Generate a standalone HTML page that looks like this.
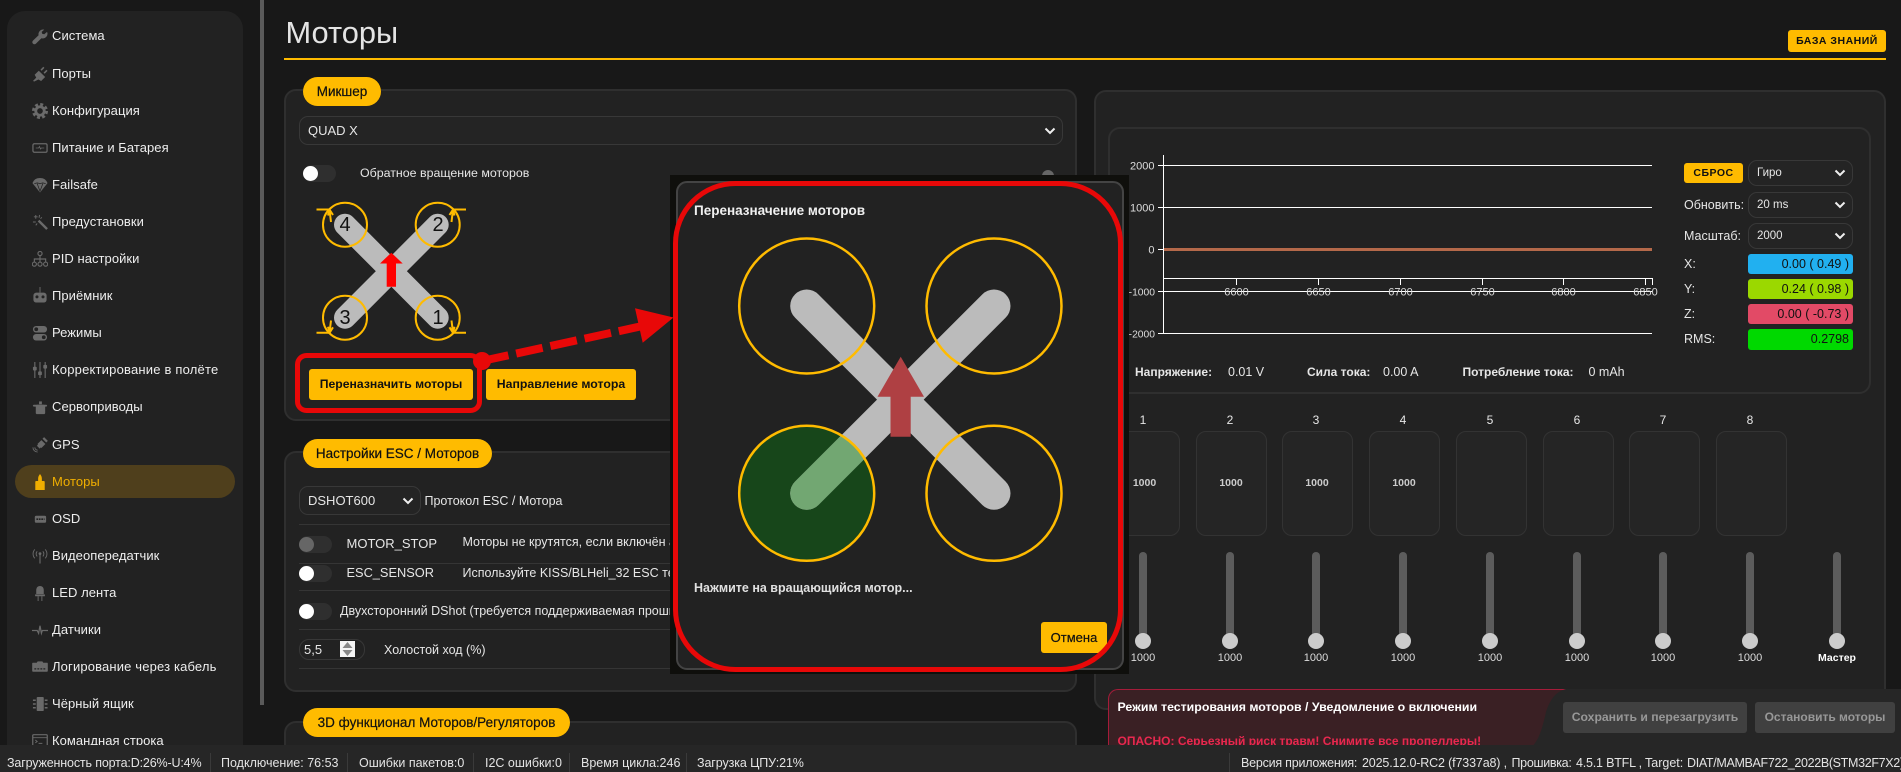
<!DOCTYPE html>
<html lang="ru"><head><meta charset="utf-8"><title>Моторы</title>
<style>
*{box-sizing:border-box}
html,body{margin:0;padding:0;width:1901px;height:772px;overflow:hidden;background:#181818}
body{position:relative;font-family:"Liberation Sans","DejaVu Sans",sans-serif;font-size:13px;color:#e6e6e6}
.a{position:absolute}
.t{position:absolute;white-space:nowrap;line-height:16px;height:16px;margin-top:-8px}
.panel{position:absolute;background:#222;border:2px solid #2f2f2f;border-radius:12px}
.pill{position:absolute;background:#ffbb00;color:#111;border-radius:15px;height:29px;line-height:29px;font-size:13.5px;text-align:center;white-space:nowrap;-webkit-text-stroke:.2px #111}
.btn{position:absolute;background:#ffbb00;color:#111;border-radius:3px;text-align:center;font-weight:bold;white-space:nowrap}
.sel{position:absolute;background:#242424;border:1px solid #383838;border-radius:9px;color:#e6e6e6;white-space:nowrap;padding-left:8px}
.sel svg{position:absolute;right:6px;top:50%;margin-top:-4px}
.tg{position:absolute;width:33px;height:17px;border-radius:9px;background:#2f2f2f}
.tg i{position:absolute;left:0;top:1px;width:15px;height:15px;border-radius:50%;background:#fff}
.sep{position:absolute;left:299px;width:764px;height:1px;background:#353535}
.mi{position:absolute;left:52px;white-space:nowrap;font-size:13px;line-height:16px;height:16px;margin-top:-8px;color:#eee;letter-spacing:.05px}
.ic{position:absolute;left:31.5px;width:16px;height:16px;margin-top:-8px;fill:#6a6a6a;stroke:#6a6a6a;stroke-width:0}
.box{position:absolute;top:431px;width:71px;height:105px;border:1px solid #333;border-radius:10px;background:#252525;color:#ccc;font-weight:bold;font-size:10.5px;text-align:center;line-height:103px}
.num{position:absolute;top:412px;width:30px;text-align:center;line-height:16px;color:#e6e6e6;font-size:12px}
.tr{position:absolute;top:552px;width:8px;height:91px;border-radius:4px;background:#5c5c5c}
.th{position:absolute;top:633px;width:16px;height:16px;border-radius:50%;background:#ccc}
.v{position:absolute;top:650px;width:40px;text-align:center;line-height:16px;color:#ddd;font-size:11px}
.rv{position:absolute;left:1748px;width:105px;height:20px;border-radius:3px;color:#111;text-align:right;padding-right:4px;line-height:20px;font-size:12.5px}
.st{position:absolute;top:755px;line-height:16px;font-size:12.5px;color:#e4e4e4;white-space:nowrap}
.ss{position:absolute;top:753px;bottom:0;width:1px;background:#3a3a3a}
</style></head><body>

<!-- sidebar -->
<div class="a" style="left:7px;top:11px;width:236px;height:760px;background:#222;border-radius:18px"></div>
<div class="a" style="left:260px;top:0;width:4px;height:705px;background:#5a5a5a"></div>
<div class="a" style="left:15px;top:465px;width:220px;height:33px;background:#4f3f1c;border-radius:17px"></div>

<div class="mi" style="top:36px">Система</div>
<div class="mi" style="top:73.5px">Порты</div>
<div class="mi" style="top:110.5px">Конфигурация</div>
<div class="mi" style="top:147.5px">Питание и Батарея</div>
<div class="mi" style="top:184.5px">Failsafe</div>
<div class="mi" style="top:221.5px">Предустановки</div>
<div class="mi" style="top:259px">PID настройки</div>
<div class="mi" style="top:296px">Приёмник</div>
<div class="mi" style="top:333px">Режимы</div>
<div class="mi" style="top:370px;letter-spacing:.2px">Корректирование в полёте</div>
<div class="mi" style="top:407px">Сервоприводы</div>
<div class="mi" style="top:444.5px">GPS</div>
<div class="mi" style="top:481.5px;color:#f0ae00">Моторы</div>
<div class="mi" style="top:518.5px">OSD</div>
<div class="mi" style="top:556px">Видеопередатчик</div>
<div class="mi" style="top:593px">LED лента</div>
<div class="mi" style="top:630px">Датчики</div>
<div class="mi" style="top:667px;letter-spacing:.15px">Логирование через кабель</div>
<div class="mi" style="top:704px">Чёрный ящик</div>
<div class="mi" style="top:741px">Командная строка</div>

<svg class="ic" style="top:36.5px" viewBox="0 0 17 17"><path d="M16 3l-3 2.6-2.2-.5-.5-2L13 .6A5 5 0 0 0 7 6.6L1 12.3a2.2 2.2 0 0 0 3.2 3.2L10 9.8A5 5 0 0 0 16 3z"/></svg>
<svg class="ic" style="top:73.5px" viewBox="0 0 17 17"><path d="M1 16l3.5-3.700-1.700-3 4.400-4.300 6.800 6.700-4.300 4.300-2.900-1.600L2.500 16.500zM9 3.800l3-3 1.200 1.200-3 3zM12.300 7l3-3 1.200 1.200-3 3z"/></svg>
<svg class="ic" style="top:110.5px" viewBox="0 0 17 17"><circle cx="8.5" cy="8.5" r="4.500" fill="none" stroke-width="3"/><circle cx="8.5" cy="8.5" r="7" fill="none" stroke-width="3" stroke-dasharray="3.1 2.4"/></svg>
<svg class="ic" style="top:147.5px" viewBox="0 0 17 17"><rect x="1" y="4" width="15" height="9" rx="1.5" fill="none" stroke-width="1.3"/><path d="M4 8.5h3l1-1.500 1 2.500 1-1h3" fill="none" stroke-width=".9"/></svg>
<svg class="ic" style="top:184.5px" viewBox="0 0 17 17"><path d="M.5 6.500C2 2.500 5 1 8.500 1s6.500 1.500 8 5.500l-8 10z"/><path d="M2.500 7l3-.8 3 .8 3-.8 3 .8M5.500 7l3 8 3-8" fill="none" stroke="#222" stroke-width=".8"/></svg>
<svg class="ic" style="top:221.5px" viewBox="0 0 17 17"><path d="M7 7l9 9" fill="none" stroke-width="2.6"/><path d="M4 1v4M2 3h4M1 8.500h3M8 1l-.5 3M10.500 3.500L9 5M4 12l1.500-2" fill="none" stroke-width="1"/></svg>
<svg class="ic" style="top:259px" viewBox="0 0 17 17"><circle cx="8.5" cy="2.7" r="2.2" fill="none" stroke-width="1.2"/><circle cx="2.5" cy="14" r="2.2" fill="none" stroke-width="1.2"/><circle cx="8.5" cy="14" r="2.2" fill="none" stroke-width="1.2"/><circle cx="14.500" cy="14" r="2.2" fill="none" stroke-width="1.2"/><path d="M8.500 5v7M2.500 12V8.500h12V12" fill="none" stroke-width="1.2"/></svg>
<svg class="ic" style="top:295px" viewBox="0 0 17 17"><rect x="1.5" y="6" width="14" height="10.5" rx="3"/><path d="M8.500 0v6" fill="none" stroke-width="1"/><circle cx="5.3" cy="10.5" r="1.6" fill="#222"/><circle cx="11.7" cy="10.5" r="1.6" fill="#222"/></svg>
<svg class="ic" style="top:333px" viewBox="0 0 17 17"><rect x="1" y="1" width="15" height="7" rx="3.5"/><rect x="1" y="9.5" width="15" height="7" rx="3.5"/><circle cx="4.5" cy="4.5" r="2" fill="#222"/><circle cx="12.5" cy="13" r="2" fill="#222"/></svg>
<svg class="ic" style="top:370px" viewBox="0 0 17 17"><path d="M3 0v17M8.500 0v17M14 0v17" fill="none" stroke-width="1.2"/><rect x="1" y="5" width="4" height="4" rx="1"/><rect x="6.5" y="10" width="4" height="4" rx="1"/><rect x="12" y="3" width="4" height="4" rx="1"/></svg>
<svg class="ic" style="top:407.5px" viewBox="0 0 17 17"><rect x="4" y="5" width="10" height="10" rx="1.5"/><rect x="1" y="5" width="15" height="2" rx="1"/><rect x="7.5" y="1.5" width="3" height="3"/></svg>
<svg class="ic" style="top:444.5px" viewBox="0 0 17 17"><rect x="7" y="4.5" width="6" height="6" transform="rotate(45 10 7.5)"/><path d="M12 1l4 4M6 8.500l3 3" fill="none" stroke-width="2.4"/><path d="M1 11a5 5 0 0 0 5 5M3 11a3 3 0 0 0 3 3" fill="none" stroke-width="1"/></svg>
<svg class="ic" style="top:481.5px;fill:#f0ae00" viewBox="0 0 17 17"><path d="M8.500 0c1.200 1.500 2 3 2 5v2.500h2c.7 0 1 .4 1 1V17h-10V8.500c0-.6.3-1 1-1h2V5c0-2 .8-3.500 2-5z"/></svg>
<svg class="ic" style="top:518.5px" viewBox="0 0 17 17"><rect x="3" y="5" width="12" height="7.5" rx="1.5"/><path d="M4.700 8.700h8.600" fill="none" stroke="#222" stroke-width="1.7" stroke-dasharray="1.8 .8"/></svg>
<svg class="ic" style="top:556px" viewBox="0 0 17 17"><path d="M8.500 6.500v10" fill="none" stroke-width="1.2"/><circle cx="8.5" cy="6" r="1.5"/><path d="M5.500 3.500a4 4 0 0 0 0 5.500M11.500 3.500a4 4 0 0 1 0 5.500M3 1.500a7 7 0 0 0 0 9.500M14 1.500a7 7 0 0 1 0 9.500" fill="none" stroke-width="1"/></svg>
<svg class="ic" style="top:593px" viewBox="0 0 17 17"><path d="M4.500 5a4 4 0 0 1 8 0v4.500h-8z"/><rect x="3.3" y="10" width="10.4" height="2" rx=".5"/><path d="M6.500 12v5M10.500 12v5" fill="none" stroke-width="1"/></svg>
<svg class="ic" style="top:630px" viewBox="0 0 17 17"><path d="M0 9h5.500L7 12l1.500-8 1.500 8 1-3h6" fill="none" stroke-width="1.3"/></svg>
<svg class="ic" style="top:667px" viewBox="0 0 17 17"><path d="M1 4h4l1-1.500h5L12 4h4c.5 0 .8.3.8 1v7.500c0 .6-.3 1-.8 1H1c-.5 0-.8-.4-.8-1V5C.2 4.300.5 4 1 4z"/><path d="M2.500 10.500h12" fill="none" stroke="#222" stroke-width="1.4" stroke-dasharray="2 1.2"/></svg>
<svg class="ic" style="top:704px" viewBox="0 0 17 17"><rect x="5" y="1" width="7.5" height="15" rx="1"/><path d="M1 4.500h3M1 8.500h3M1 12.500h3M13.500 4.500h3M13.500 8.500h3M13.500 12.500h3" fill="none" stroke-width="1.6"/></svg>
<svg class="ic" style="top:741px" viewBox="0 0 17 17"><rect x=".8" y="1.8" width="15.4" height="14" rx="1" fill="none" stroke-width="1.3"/><path d="M1 5h15M3.500 7.500l2 1.500-2 1.500M7 11h4" fill="none" stroke-width="1"/></svg>

<!-- heading -->
<div class="t" style="left:285.5px;top:33px;height:38px;line-height:38px;margin-top:-19px;font-size:30.8px;color:#e4e4e4;font-weight:normal">Моторы</div>
<div class="a" style="left:284px;top:58px;width:1602px;height:2px;background:#ffbb00"></div>
<div class="btn" style="left:1788px;top:30px;width:98px;height:22px;line-height:22px;font-size:10.5px;letter-spacing:.5px">БАЗА ЗНАНИЙ</div>

<!-- mixer panel -->
<div class="panel" style="left:284px;top:89px;width:793px;height:332px"></div>
<div class="pill" style="left:303px;top:77px;width:78px">Микшер</div>
<div class="sel" style="left:299px;top:116px;width:764px;height:29px;line-height:27px">QUAD X<svg width="12" height="8" viewBox="0 0 12 8"><path d="M1.500 1.500L6 6l4.500-4.500" fill="none" stroke="#eee" stroke-width="2"/></svg></div>
<div class="tg" style="left:303px;top:165px"><i></i></div>
<div class="t" style="left:360px;top:173px;font-size:12.4px">Обратное вращение моторов</div>
<div class="a" style="left:1042px;top:170px;width:12px;height:12px;border-radius:50%;background:#666"></div>

<!-- small quad -->
<svg class="a" style="left:0;top:0" width="1901" height="772">
<g stroke="#bbb" stroke-width="22" stroke-linecap="round"><line x1="345" y1="224.7" x2="437.7" y2="317.7"/><line x1="437.7" y1="224.7" x2="345" y2="317.7"/></g>
<g fill="none" stroke="#ffbb00" stroke-width="2">
<circle cx="345" cy="224.7" r="22"/><circle cx="437.7" cy="224.7" r="22"/><circle cx="345" cy="317.7" r="22"/><circle cx="437.7" cy="317.7" r="22"/>
<path d="M316.5 209.500H329.5L331 222M329.5 209.500l-1.500 6M329.5 209.500l3.500 5.500"/>
<path d="M466 209.500H453L451.500 222M453 209.500l1.500 6M453 209.500l-3.500 5.500"/>
<path d="M316.5 332.800H329.5L331 320.500M329.5 332.800l-1.500-6M329.500 332.800l3.500-5.500"/>
<path d="M466 332.800H453L451.500 320.500M453 332.800l1.500-6M453 332.800l-3.500-5.500"/>
</g>
<g font-family="Liberation Sans, sans-serif" font-size="20" fill="#111" text-anchor="middle"><text x="345" y="231">4</text><text x="438" y="231">2</text><text x="345" y="324">3</text><text x="438" y="324">1</text></g>
<path d="M391.3 252.700L402.7 263.500H396V286.700H386.700V263.500H380z" fill="#ff0000"/>
</svg>

<div class="btn" style="left:309px;top:369px;width:164px;height:31px;line-height:31px;font-size:12.2px">Переназначить моторы</div>
<div class="btn" style="left:486px;top:369px;width:150px;height:31px;line-height:31px;font-size:12.3px">Направление мотора</div>

<!-- ESC panel -->
<div class="panel" style="left:284px;top:451px;width:793px;height:241px"></div>
<div class="pill" style="left:303px;top:439px;width:189px">Настройки ESC / Моторов</div>
<div class="sel" style="left:299px;top:486px;width:122px;height:29px;line-height:27px">DSHOT600<svg width="12" height="8" viewBox="0 0 12 8"><path d="M1.500 1.500L6 6l4.500-4.500" fill="none" stroke="#eee" stroke-width="2"/></svg></div>
<div class="t" style="left:424.5px;top:501px;font-size:12.5px">Протокол ESC / Мотора</div>
<div class="sep" style="top:524px"></div><div class="sep" style="top:563px"></div><div class="sep" style="top:590px"></div><div class="sep" style="top:629px"></div><div class="sep" style="top:668px"></div>
<div class="tg" style="left:299px;top:536px"><i style="background:#666"></i></div>
<div class="t" style="left:346.5px;top:544px;font-size:13px">MOTOR_STOP</div>
<div class="t" style="left:462.5px;top:542px;font-size:12.5px">Моторы не крутятся, если включён арминг</div>
<div class="tg" style="left:299px;top:565px"><i></i></div>
<div class="t" style="left:346.5px;top:572.5px;font-size:12.8px">ESC_SENSOR</div>
<div class="t" style="left:462.5px;top:572.5px;font-size:12.5px">Используйте KISS/BLHeli_32 ESC телеметрию</div>
<div class="tg" style="left:299px;top:603px"><i></i></div>
<div class="t" style="left:340px;top:611px;font-size:12.5px">Двухсторонний DShot (требуется поддерживаемая прошивка)</div>
<div class="a" style="left:299px;top:639px;width:66px;height:21px;border:1px solid #383838;border-radius:10px;background:#222"></div>
<div class="t" style="left:304px;top:650px;font-size:13px">5,5</div>
<svg class="a" style="left:340px;top:641px" width="15" height="16"><rect width="15" height="16" fill="#f5f5f5"/><path d="M7.500 1l5 6h-10zM7.500 15l5-6h-10z" fill="#888"/></svg>
<div class="t" style="left:384px;top:650px;font-size:12.5px">Холостой ход (%)</div>

<!-- 3D panel -->
<div class="panel" style="left:284px;top:721px;width:793px;height:80px"></div>
<div class="pill" style="left:303px;top:708px;width:267px">3D функционал Моторов/Регуляторов</div>

<!-- right panel -->
<div class="panel" style="left:1094px;top:90px;width:792px;height:620px"></div>
<div class="panel" style="left:1108px;top:127px;width:763px;height:267px"></div>

<svg class="a" style="left:0;top:0" width="1901" height="772">
<g stroke="#fff" stroke-width="1" shape-rendering="crispEdges">
<line x1="1163.5" y1="155" x2="1163.5" y2="334"/>
<line x1="1158" y1="165.5" x2="1652" y2="165.5"/><line x1="1158" y1="207.5" x2="1652" y2="207.5"/><line x1="1158" y1="291.5" x2="1652" y2="291.5"/><line x1="1158" y1="333.5" x2="1652" y2="333.5"/><line x1="1158" y1="249.5" x2="1164" y2="249.5"/>
<line x1="1163" y1="278.5" x2="1653" y2="278.5"/>
<line x1="1236.5" y1="278" x2="1236.5" y2="285"/><line x1="1318.5" y1="278" x2="1318.5" y2="285"/><line x1="1400.5" y1="278" x2="1400.5" y2="285"/><line x1="1482.5" y1="278" x2="1482.5" y2="285"/><line x1="1563.5" y1="278" x2="1563.5" y2="285"/><line x1="1645.5" y1="278" x2="1645.5" y2="285"/><line x1="1652.5" y1="278" x2="1652.5" y2="285"/>
</g>
<line x1="1164" y1="249.5" x2="1652" y2="249.5" stroke="#b5694a" stroke-width="3"/>
<g font-family="Liberation Sans, sans-serif" font-size="11" fill="#ddd" text-anchor="end"><text x="1154.5" y="169.5">2000</text><text x="1154.5" y="211.5">1000</text><text x="1154.5" y="253.5">0</text></g>
<g font-family="Liberation Sans, sans-serif" font-size="10.3" fill="#ddd" text-anchor="end"><text x="1155" y="295.5">-1000</text><text x="1155" y="337.5">-2000</text></g>
<g font-family="Liberation Sans, sans-serif" font-size="11" fill="#ddd" text-anchor="middle"><text x="1236.5" y="295.5">6600</text><text x="1318.5" y="295.5">6650</text><text x="1400.5" y="295.5">6700</text><text x="1482.5" y="295.5">6750</text><text x="1563.5" y="295.5">6800</text><text x="1645.5" y="295.5">6850</text></g>
</svg>

<div class="t" style="left:1135px;top:372px;font-size:12px;font-weight:bold">Напряжение:</div>
<div class="t" style="left:1228px;top:372px;font-size:12.5px">0.01 V</div>
<div class="t" style="left:1307px;top:372px;font-size:12px;font-weight:bold">Сила тока:</div>
<div class="t" style="left:1383px;top:372px;font-size:12.5px">0.00 A</div>
<div class="t" style="left:1462.5px;top:372px;font-size:12px;font-weight:bold">Потребление тока:</div>
<div class="t" style="left:1588.5px;top:372px;font-size:12.5px">0 mAh</div>

<div class="btn" style="left:1684px;top:163px;width:59px;height:20px;line-height:20px;font-size:10.5px;letter-spacing:.5px">СБРОС</div>
<div class="sel" style="left:1748px;top:160px;width:105px;height:26px;line-height:25px;font-size:11.5px">Гиро<svg width="12" height="8" viewBox="0 0 12 8"><path d="M1.500 1.500L6 6l4.500-4.500" fill="none" stroke="#eee" stroke-width="2"/></svg></div>
<div class="t" style="left:1684px;top:205px;font-size:12.5px">Обновить:</div>
<div class="sel" style="left:1748px;top:191.5px;width:105px;height:26px;line-height:25px;font-size:11.5px">20 ms<svg width="12" height="8" viewBox="0 0 12 8"><path d="M1.500 1.500L6 6l4.500-4.500" fill="none" stroke="#eee" stroke-width="2"/></svg></div>
<div class="t" style="left:1684px;top:236px;font-size:12.5px">Масштаб:</div>
<div class="sel" style="left:1748px;top:223px;width:105px;height:26px;line-height:25px;font-size:11.5px">2000<svg width="12" height="8" viewBox="0 0 12 8"><path d="M1.500 1.500L6 6l4.500-4.500" fill="none" stroke="#eee" stroke-width="2"/></svg></div>
<div class="t" style="left:1684px;top:264px;font-size:12.5px">X:</div>
<div class="rv" style="top:254px;background:#21b0f0">0.00 ( 0.49 )</div>
<div class="t" style="left:1684px;top:289px;font-size:12.5px">Y:</div>
<div class="rv" style="top:279px;background:#9bd800">0.24 ( 0.98 )</div>
<div class="t" style="left:1684px;top:314px;font-size:12.5px">Z:</div>
<div class="rv" style="top:304px;background:#e24a66">0.00 ( -0.73 )</div>
<div class="t" style="left:1684px;top:339px;font-size:12.5px">RMS:</div>
<div class="rv" style="top:329px;height:21px;line-height:21px;background:#00d900">0.2798</div>

<!-- motors -->
<div class="num" style="left:1128px">1</div><div class="num" style="left:1215px">2</div><div class="num" style="left:1301px">3</div><div class="num" style="left:1388px">4</div><div class="num" style="left:1475px">5</div><div class="num" style="left:1562px">6</div><div class="num" style="left:1648px">7</div><div class="num" style="left:1735px">8</div>
<div class="box" style="left:1109px">1000</div><div class="box" style="left:1195.5px">1000</div><div class="box" style="left:1281.5px">1000</div><div class="box" style="left:1368.5px">1000</div><div class="box" style="left:1455.5px"></div><div class="box" style="left:1542.5px"></div><div class="box" style="left:1628.5px"></div><div class="box" style="left:1715.5px"></div>

<div class="tr" style="left:1139px"></div><div class="tr" style="left:1226px"></div><div class="tr" style="left:1312px"></div><div class="tr" style="left:1399px"></div><div class="tr" style="left:1486px"></div><div class="tr" style="left:1573px"></div><div class="tr" style="left:1659px"></div><div class="tr" style="left:1746px"></div><div class="tr" style="left:1833px"></div>
<div class="th" style="left:1135px"></div><div class="th" style="left:1222px"></div><div class="th" style="left:1308px"></div><div class="th" style="left:1395px"></div><div class="th" style="left:1482px"></div><div class="th" style="left:1569px"></div><div class="th" style="left:1655px"></div><div class="th" style="left:1742px"></div><div class="th" style="left:1829px"></div>
<div class="v" style="left:1123px">1000</div><div class="v" style="left:1210px">1000</div><div class="v" style="left:1296px">1000</div><div class="v" style="left:1383px">1000</div><div class="v" style="left:1470px">1000</div><div class="v" style="left:1557px">1000</div><div class="v" style="left:1643px">1000</div><div class="v" style="left:1730px">1000</div>
<div class="v" style="left:1817px;font-weight:bold;color:#fff;font-size:10.5px">Мастер</div>

<!-- warning + toolbar -->
<div class="a" style="left:1108px;top:689px;width:480px;height:70px;background:#3a2024;border:1px solid #a51c3a;border-bottom:0;border-radius:10px 0 0 0"></div>
<div class="t" style="left:1117.5px;top:707px;font-size:12.35px;font-weight:bold;color:#fff">Режим тестирования моторов / Уведомление о включении</div>
<div class="t" style="left:1117.5px;top:740.5px;font-size:12px;font-weight:bold;color:#e8284f">ОПАСНО: Серьезный риск травм! Снимите все пропеллеры!</div>
<svg class="a" style="left:1500px;top:688px" width="401" height="60"><path d="M401 1H66C55 4 50 12 46 24 42 42 38 55 30 60H401z" fill="#262626"/></svg>
<div class="btn" style="left:1563px;top:702px;width:184px;height:31px;line-height:31px;background:#404040;color:#989898;font-size:12.2px">Сохранить и перезагрузить</div>
<div class="btn" style="left:1755px;top:702px;width:140px;height:31px;line-height:31px;background:#404040;color:#989898;font-size:12px">Остановить моторы</div>

<!-- status bar -->
<div class="a" style="left:0;top:745px;width:1901px;height:27px;background:#262626"></div>
<div class="st" style="left:7px;letter-spacing:-.15px">Загруженность порта:D:26%-U:4%</div><div class="ss" style="left:210px"></div>
<div class="st" style="left:221px">Подключение: 76:53</div><div class="ss" style="left:347px"></div>
<div class="st" style="left:359px">Ошибки пакетов:0</div><div class="ss" style="left:473px"></div>
<div class="st" style="left:485px">I2C ошибки:0</div><div class="ss" style="left:569px"></div>
<div class="st" style="left:581px">Время цикла:246</div><div class="ss" style="left:686px"></div>
<div class="st" style="left:697px;letter-spacing:-.1px">Загрузка ЦПУ:21%</div>
<div class="ss" style="left:1229px"></div>
<div class="st" style="left:1241px;letter-spacing:-.22px">Версия приложения:</div>
<div class="st" style="left:1362px;letter-spacing:-.15px">2025.12.0-RC2 (f7337a8) ,</div>
<div class="st" style="left:1511.5px;letter-spacing:-.3px">Прошивка:</div>
<div class="st" style="left:1576px;letter-spacing:-.2px">4.5.1 BTFL ,</div>
<div class="st" style="left:1645px">Target:</div>
<div class="st" style="left:1687px;letter-spacing:-.33px">DIAT/MAMBAF722_2022B(STM32F7X2)</div>

<!-- modal -->
<div class="a" style="left:670px;top:175px;width:459px;height:499px;background:#0f0f0c"></div>
<div class="a" style="left:676px;top:181px;width:448px;height:489px;background:#222;border:2px solid #444;border-radius:11px"></div>
<div class="t" style="left:694px;top:210.5px;font-size:13.5px;font-weight:bold;color:#f0f0f0">Переназначение моторов</div>
<svg class="a" style="left:0;top:0" width="1901" height="772">
<circle cx="806.7" cy="493.3" r="68" fill="#17461a"/>
<g stroke="#bbb" stroke-width="33" stroke-linecap="round"><line x1="806.7" y1="306" x2="994" y2="493.3"/><line x1="994" y1="306" x2="806.7" y2="493.3"/></g>
<clipPath id="gc"><circle cx="806.7" cy="493.3" r="68"/></clipPath>
<line x1="900" y1="400" x2="806.7" y2="493.3" stroke="#72a772" stroke-width="33" stroke-linecap="round" clip-path="url(#gc)"/>
<g fill="none" stroke="#ffbb00" stroke-width="2.5"><circle cx="806.7" cy="306" r="67.5"/><circle cx="994" cy="306" r="67.5"/><circle cx="806.7" cy="493.3" r="67.5"/><circle cx="994" cy="493.3" r="67.5"/></g>
<path d="M900.7 356.7L924 396.7H910.7V436.7H890.5V396.7H877.5z" fill="#af4043"/>
</svg>
<div class="t" style="left:694px;top:588px;font-size:12.5px;font-weight:bold;color:#e0e0e0">Нажмите на вращающийся мотор...</div>
<div class="btn" style="left:1041px;top:622px;width:66px;height:31px;line-height:31px;font-size:13px;font-weight:normal;-webkit-text-stroke:.2px #111">Отмена</div>

<!-- annotations -->
<svg class="a" style="left:0;top:0" width="1901" height="772" fill="none">
<rect x="675.5" y="183.5" width="445" height="486" rx="60" ry="60" stroke="#e80808" stroke-width="5"/>
<rect x="297.5" y="355.5" width="182" height="55" rx="9" stroke="#e80808" stroke-width="5"/>
<circle cx="482" cy="361" r="9" fill="#e80808"/>
<line x1="482" y1="361" x2="647" y2="325" stroke="#e80808" stroke-width="8" stroke-dasharray="27 8"/>
<path d="M673.5 317.5L635 308.3L642.7 342.7z" fill="#e80808"/>
</svg>
</body></html>
